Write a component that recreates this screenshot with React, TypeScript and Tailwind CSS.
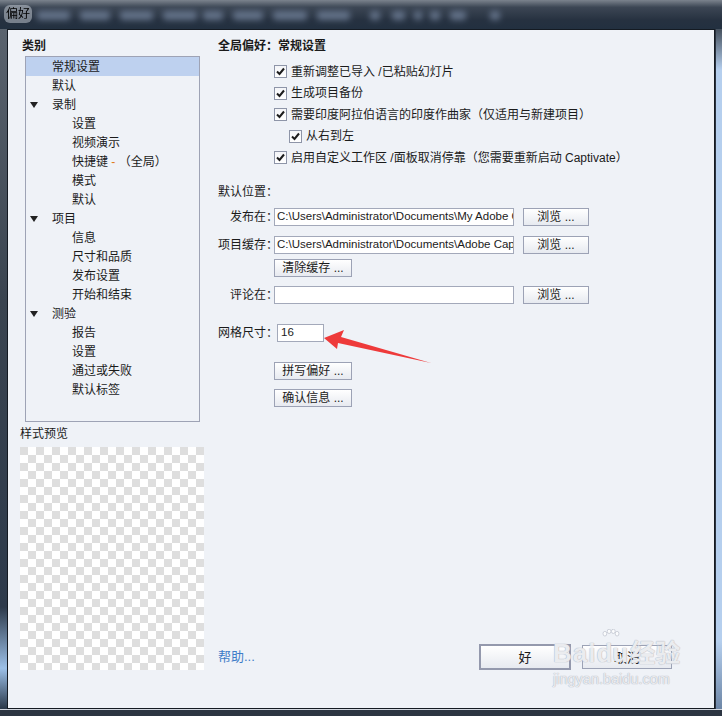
import React from "react";

type Node = { label: React.ReactNode; level: 0 | 1; open?: boolean; selected?: boolean };

const TREE: Node[] = [
  { label: "常规设置", level: 0, selected: true },
  { label: "默认", level: 0 },
  { label: "录制", level: 0, open: true },
  { label: "设置", level: 1 },
  { label: "视频演示", level: 1 },
  {
    label: (
      <>
        快捷键 <span className="text-[#e07a1a]">-</span> （全局）
      </>
    ),
    level: 1,
  },
  { label: "模式", level: 1 },
  { label: "默认", level: 1 },
  { label: "项目", level: 0, open: true },
  { label: "信息", level: 1 },
  { label: "尺寸和品质", level: 1 },
  { label: "发布设置", level: 1 },
  { label: "开始和结束", level: 1 },
  { label: "测验", level: 0, open: true },
  { label: "报告", level: 1 },
  { label: "设置", level: 1 },
  { label: "通过或失败", level: 1 },
  { label: "默认标签", level: 1 },
];

const CHECKS = [
  { label: "重新调整已导入 /已粘贴幻灯片", indent: false },
  { label: "生成项目备份", indent: false },
  { label: "需要印度阿拉伯语言的印度作曲家（仅适用与新建项目）", indent: false },
  { label: "从右到左", indent: true },
  { label: "启用自定义工作区 /面板取消停靠（您需要重新启动 Captivate）", indent: false },
];

// 标题栏后面被模糊掉的内容
const BLOBS = [
  [37, 33], [80, 30], [120, 33], [163, 34], [203, 20], [233, 30], [273, 34], [317, 33],
  [370, 10], [392, 13], [414, 8], [430, 10], [450, 16], [490, 10],
];

function Check() {
  return (
    <span className="flex h-[13px] w-[13px] shrink-0 items-center justify-center border border-[#8e95a8] bg-[linear-gradient(#f4f5f8,#ffffff)]">
      <svg viewBox="0 0 11 11" className="h-[11px] w-[11px]" fill="none" stroke="#1c1c1c" strokeWidth="2">
        <path d="M2 5.5 L4.5 8 L9 2.5" />
      </svg>
    </span>
  );
}

function Btn({ children, className = "" }: { children: React.ReactNode; className?: string }) {
  return (
    <button
      type="button"
      className={`flex shrink-0 items-center justify-center border border-[#9ca2b5] bg-[linear-gradient(#ffffff,#e7eaf0)] leading-none text-[#1b1b1b] ${className}`}
    >
      {children}
    </button>
  );
}

function Field({ label, value, browse = true }: { label: string; value?: string; browse?: boolean }) {
  return (
    <div className="flex h-[18px] items-center">
      <span className="w-[60px] shrink-0 whitespace-nowrap text-right">{label}</span>
      <div className="ml-[-4px] flex h-[18px] w-[240px] items-center overflow-hidden whitespace-nowrap border border-[#a3a9ba] bg-white px-[2px] text-[11.5px]">
        {value}
      </div>
      {browse && <Btn className="ml-[9px] h-[18px] w-[66px]">浏览 ...</Btn>}
    </div>
  );
}

export default function App() {
  return (
    <div className="relative h-[716px] w-[722px] overflow-hidden bg-[#27313e] font-['Liberation_Sans','Noto_Sans_CJK_SC',sans-serif] text-[12px] text-[#1b1b1b]">
      {/* 标题栏 */}
      <div className="relative h-[29px] overflow-hidden bg-[linear-gradient(#7b838d,#3c4654_25%,#263140_70%,#223040)]">
        {BLOBS.map(([x, w], i) => (
          <div
            key={i}
            className="absolute top-[11px] h-[9px] rounded-[3px] bg-[#71819a] opacity-80 blur-[3px]"
            style={{ left: x, width: w }}
          />
        ))}
        <span className="absolute left-[4px] top-[5px] rounded-[6px] bg-[#c9cfd8]/50 px-[2px] text-[12px] leading-[18px] text-black blur-[0.2px]">
          偏好
        </span>
      </div>

      <div className="flex h-[680px]">
        <div className="w-[7px] bg-[linear-gradient(#5a636e,#3a4450_40%,#2d3a4b_85%,#9cc0e8_94%,#2a3849)]" />

        {/* 客户区 */}
        <div className="flex w-[708px] border border-[#141a22] bg-[#eff2f7]">
          {/* 左列 */}
          <div className="ml-[12px] flex w-[184px] flex-col pt-[8px]">
            <div className="ml-[2px] h-[16px] font-bold leading-[16px]">类别</div>
            <div className="ml-[5px] mt-[2px] h-[366px] w-[175px] border border-[#9ea3b5]">
              {TREE.map((n, i) => (
                <div
                  key={i}
                  className={`flex h-[19px] items-center whitespace-nowrap ${n.selected ? "bg-[#bed1ef]" : ""} ${
                    n.level === 0 ? "pl-[4px]" : "pl-[46px]"
                  }`}
                >
                  {n.level === 0 && (
                    <span className="flex w-[22px] shrink-0 items-center">
                      {n.open && (
                        <svg viewBox="0 0 8 6" className="h-[6px] w-[8px]">
                          <path d="M0 0 H8 L4 6 Z" fill="#222" />
                        </svg>
                      )}
                    </span>
                  )}
                  <span>{n.label}</span>
                </div>
              ))}
            </div>
            <div className="mt-[4px] h-[16px] leading-[16px]">样式预览</div>
            <div className="mt-[5px] h-[223px] w-[184px] bg-[conic-gradient(#ffffff_25%,#dedede_0_50%,#ffffff_0_75%,#dedede_0)] bg-[length:16px_16px]" />
          </div>

          {/* 右列 */}
          <div className="ml-[14px] flex flex-1 flex-col pt-[8px]">
            <div className="h-[16px] font-bold leading-[16px]">全局偏好：常规设置</div>

            <div className="mt-[7px] flex flex-col">
              {CHECKS.map((c) => (
                <div
                  key={c.label}
                  className={`flex h-[21.5px] items-center gap-[4px] whitespace-nowrap ${c.indent ? "pl-[71px]" : "pl-[56px]"}`}
                >
                  <Check />
                  <span>{c.label}</span>
                </div>
              ))}
            </div>

            <div className="mt-[15px] h-[16px] leading-[16px]">默认位置：</div>

            <div className="mt-[8px]">
              <Field label="发布在：" value={"C:\\Users\\Administrator\\Documents\\My Adobe Ca"} />
            </div>
            <div className="mt-[10px]">
              <Field label="项目缓存：" value={"C:\\Users\\Administrator\\Documents\\Adobe Capt"} />
            </div>
            <Btn className="ml-[56px] mt-[5px] h-[18px] w-[78px]">清除缓存 ...</Btn>
            <div className="mt-[9px]">
              <Field label="评论在：" value="" />
            </div>

            <div className="mt-[20px] flex h-[18px] items-center">
              <span className="w-[60px] shrink-0 whitespace-nowrap">网格尺寸：</span>
              <div className="ml-[-1px] flex h-[18px] w-[47px] items-center border border-[#a3a9ba] bg-white px-[3px] text-[11.5px]">
                16
              </div>
            </div>

            <Btn className="ml-[56px] mt-[20px] h-[18px] w-[78px]">拼写偏好 ...</Btn>
            <Btn className="ml-[56px] mt-[9px] h-[18px] w-[78px]">确认信息 ...</Btn>

            <div className="flex-1" />

            <div className="mb-[38px] mr-[42px] flex items-center">
              <span className="text-[13px] text-[#3f7dc8]">帮助...</span>
              <div className="flex-1" />
              <Btn className="h-[26px] w-[92px] border-2 border-[#9499ad] text-[13px]">好</Btn>
              <Btn className="ml-[11px] h-[24px] w-[90px] text-[13px]">取消</Btn>
            </div>
          </div>
        </div>

        <div className="w-[7px] border-l border-[#2b333e] bg-[linear-gradient(#45505d,#b5cfee_6%,#b5cfee_90%,#6d86a6)]" />
      </div>

      <div className="h-[7px] border-t border-[#d3d8e0] bg-[#2c3542]" />

      {/* 红色箭头标注 */}
      <svg className="pointer-events-none absolute inset-0" width="722" height="716" viewBox="0 0 722 716">
        <polygon points="324,338 344,330 341,337 431,363 338,343 337,349" fill="#ee3a3a" />
      </svg>

      {/* 百度经验水印 */}
      <div className="pointer-events-none absolute left-[553px] top-[640px] flex flex-col items-start text-white/75 [text-shadow:0_0_1px_#aeb3bf,0_0_1px_#aeb3bf]">
        <div className="flex items-end leading-none">
          <span className="text-[26px] font-bold tracking-[1px]">Bai</span>
          <span className="relative text-[26px] font-bold">
            du
            <svg viewBox="0 0 20 16" className="absolute left-[5px] top-[-11px] h-[15px] w-[19px]" fill="#fff" stroke="#b3b8c4" strokeWidth="0.8" opacity="0.8">
              <ellipse cx="4" cy="5" rx="2" ry="2.5" />
              <ellipse cx="8.5" cy="2.5" rx="2" ry="2.3" />
              <ellipse cx="13" cy="2.5" rx="2" ry="2.3" />
              <ellipse cx="17" cy="5" rx="2" ry="2.5" />
            </svg>
          </span>
          <span className="ml-[2px] text-[25px] font-bold">经验</span>
        </div>
        <span className="mt-[6px] text-[14.5px] leading-none">jingyan.baidu.com</span>
      </div>
    </div>
  );
}
